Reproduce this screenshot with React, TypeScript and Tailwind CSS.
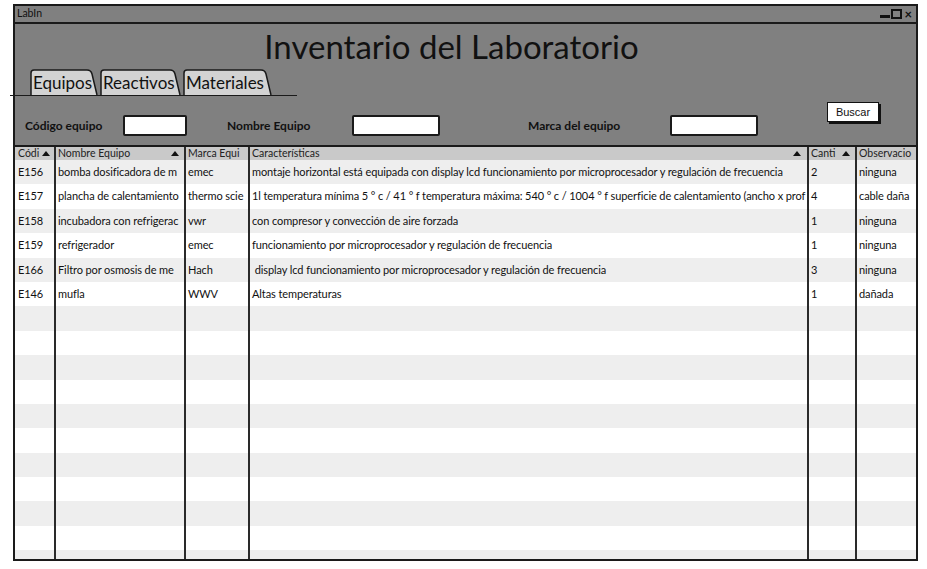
import React from "react";

const font = { fontFamily: "Lato, 'Open Sans', sans-serif" };

interface Row {
  code: string;
  name: string;
  brand: string;
  specs: string;
  qty: string;
  notes: string;
}

// texts are cut where the mockup's columns cut them
const rows: Row[] = [
  { code: "E156", name: "bomba dosificadora de m", brand: "emec", specs: "montaje horizontal está equipada con display lcd funcionamiento por microprocesador y regulación de frecuencia", qty: "2", notes: "ninguna" },
  { code: "E157", name: "plancha de calentamiento", brand: "thermo scie", specs: "1l temperatura mínima 5 ° c / 41 ° f temperatura máxima: 540 ° c / 1004 ° f superficie de calentamiento (ancho x prof", qty: "4", notes: "cable daña" },
  { code: "E158", name: "incubadora con refrigerac", brand: "vwr", specs: "con compresor y convección de aire forzada", qty: "1", notes: "ninguna" },
  { code: "E159", name: "refrigerador", brand: "emec", specs: "funcionamiento por microprocesador y regulación de frecuencia", qty: "1", notes: "ninguna" },
  { code: "E166", name: "Filtro por osmosis de me", brand: "Hach", specs: "\u00a0display lcd funcionamiento por microprocesador y regulación de frecuencia", qty: "3", notes: "ninguna" },
  { code: "E146", name: "mufla", brand: "WWV", specs: "Altas temperaturas", qty: "1", notes: "dañada" },
];

const cols = ["w-[41px]", "w-[130px]", "w-[64px]", "w-[559px]", "w-[48px]", "w-[59px]"];

function Arrow() {
  return (
    <svg width="8" height="5" viewBox="0 0 8 5" className="shrink-0">
      <path d="M0 5 L4 0 L8 5 Z" fill="#111" />
    </svg>
  );
}

function Tab({ label, width }: { label: string; width: number }) {
  return (
    <div className="relative h-[26px] flex items-center pl-[3px]" style={{ width }}>
      <svg className="absolute inset-0" width={width} height="26" viewBox={`0 0 ${width} 26`}>
        <path
          d={`M1 26 V4 Q1 1 4 1 H${width - 11} Q${width - 7} 1 ${width - 6} 5 L${width - 1} 26`}
          fill="#d3d3d3"
          stroke="#1a1a1a"
          strokeWidth="1.5"
        />
      </svg>
      <span className="relative text-[17px] text-[#111] pt-[1px] whitespace-nowrap">{label}</span>
    </div>
  );
}

function Field({ label, labelW, inputW, groupW }: { label: string; labelW: number; inputW: number; groupW: number }) {
  return (
    <div className="flex items-center mt-[19px]" style={{ width: groupW }}>
      <span className="text-[12px] font-bold text-[#111] shrink-0" style={{ width: labelW }}>
        {label}
      </span>
      <div className="h-[21px] bg-white border-2 border-[#1a1a1a] rounded-[2px]" style={{ width: inputW }} />
    </div>
  );
}

export default function App() {
  const blanks = Array.from({ length: 11 });
  return (
    <div className="w-[927px] h-[569px] bg-white overflow-hidden" style={font}>
      <div className="ml-[13px] mt-[4px] w-[905px] h-[557px] border-2 border-[#1a1a1a] bg-[#808080] flex flex-col">
        {/* title bar */}
        <div className="h-[18px] border-b-2 border-[#1a1a1a] flex items-center justify-between pl-[2px] pr-[4px]">
          <span className="text-[10.5px] text-[#111]">LabIn</span>
          <div className="flex items-end gap-[1px]">
            <div className="w-[10px] h-[3px] bg-[#111] mb-[1px]" />
            <div className="w-[11px] h-[10px] border-2 border-[#111]" />
            <span className="text-[13px] font-bold leading-[10px] text-[#111] ml-[1px]">×</span>
          </div>
        </div>

        {/* heading */}
        <div className="h-[45px] flex items-center justify-center pr-[28px]">
          <h1 className="text-[33px] text-[#111] leading-none">Inventario del Laboratorio</h1>
        </div>

        {/* tabs */}
        <div className="flex flex-col">
          <div className="flex gap-[2px] ml-[15px]">
            <Tab label="Equipos" width={68} />
            <Tab label="Reactivos" width={81} />
            <Tab label="Materiales" width={89} />
          </div>
          <div className="-ml-[5px] w-[287px] h-[1px] bg-[#1a1a1a]" />
        </div>

        {/* search */}
        <div className="h-[49px] flex items-start pl-[10px]">
          <Field label="Código equipo" labelW={98} inputW={64} groupW={202} />
          <Field label="Nombre Equipo" labelW={125} inputW={88} groupW={301} />
          <Field label="Marca del equipo" labelW={142} inputW={88} groupW={299} />
          <button
            className="mt-[6px] w-[52px] h-[20px] bg-white border border-[#111] shadow-[2px_2px_0_#111] text-[11px] text-[#111] leading-none"
            style={{ fontFamily: "'Liberation Sans', Arial, sans-serif" }}
          >
            Buscar
          </button>
        </div>

        {/* table */}
        <div className="flex-1 border-t-2 border-[#1a1a1a] overflow-hidden bg-white flex flex-col">
          <div className="h-[13px] flex bg-[#c9c9c9] text-[10.5px] text-[#222] leading-none shrink-0">
            <div className={`${cols[0]} border-r-2 border-[#2a2a2a] flex items-center gap-[3px] pl-[3px] overflow-hidden`}>
              <span>Códi</span>
              <Arrow />
            </div>
            <div className={`${cols[1]} border-r-2 border-[#2a2a2a] flex items-center justify-between pl-[2px] pr-[5px]`}>
              <span>Nombre Equipo</span>
              <Arrow />
            </div>
            <div className={`${cols[2]} border-r-2 border-[#2a2a2a] flex items-center pl-[2px] whitespace-nowrap`}>
              <span>Marca Equi</span>
            </div>
            <div className={`${cols[3]} border-r-2 border-[#2a2a2a] flex items-center justify-between pl-[2px] pr-[6px]`}>
              <span>Características</span>
              <Arrow />
            </div>
            <div className={`${cols[4]} border-r-2 border-[#2a2a2a] flex items-center gap-[6px] pl-[2px]`}>
              <span>Canti</span>
              <Arrow />
            </div>
            <div className={`${cols[5]} flex items-center pl-[2px] whitespace-nowrap`}>
              <span>Observacio</span>
            </div>
          </div>

          {rows.map((r, i) => (
            <div key={r.code} className={`h-[24.4px] flex shrink-0 text-[11px] text-[#111] ${i % 2 === 0 ? "bg-[#eeeeee]" : "bg-white"}`}>
              {[r.code, r.name, r.brand, r.specs, r.qty, r.notes].map((v, j) => (
                <div
                  key={j}
                  className={`${cols[j]} ${j < 5 ? "border-r-2 border-[#2a2a2a]" : ""} flex items-center ${j === 0 ? "pl-[3px]" : "pl-[2px]"} whitespace-nowrap tracking-[-0.1px]`}
                >
                  {v}
                </div>
              ))}
            </div>
          ))}

          {blanks.map((_, i) => (
            <div key={i} className={`h-[24.4px] flex shrink-0 ${(i + rows.length) % 2 === 0 ? "bg-[#eeeeee]" : "bg-white"}`}>
              {cols.map((c, j) => (
                <div key={j} className={`${c} ${j < 5 ? "border-r-2 border-[#2a2a2a]" : ""}`} />
              ))}
            </div>
          ))}
        </div>
      </div>
    </div>
  );
}
